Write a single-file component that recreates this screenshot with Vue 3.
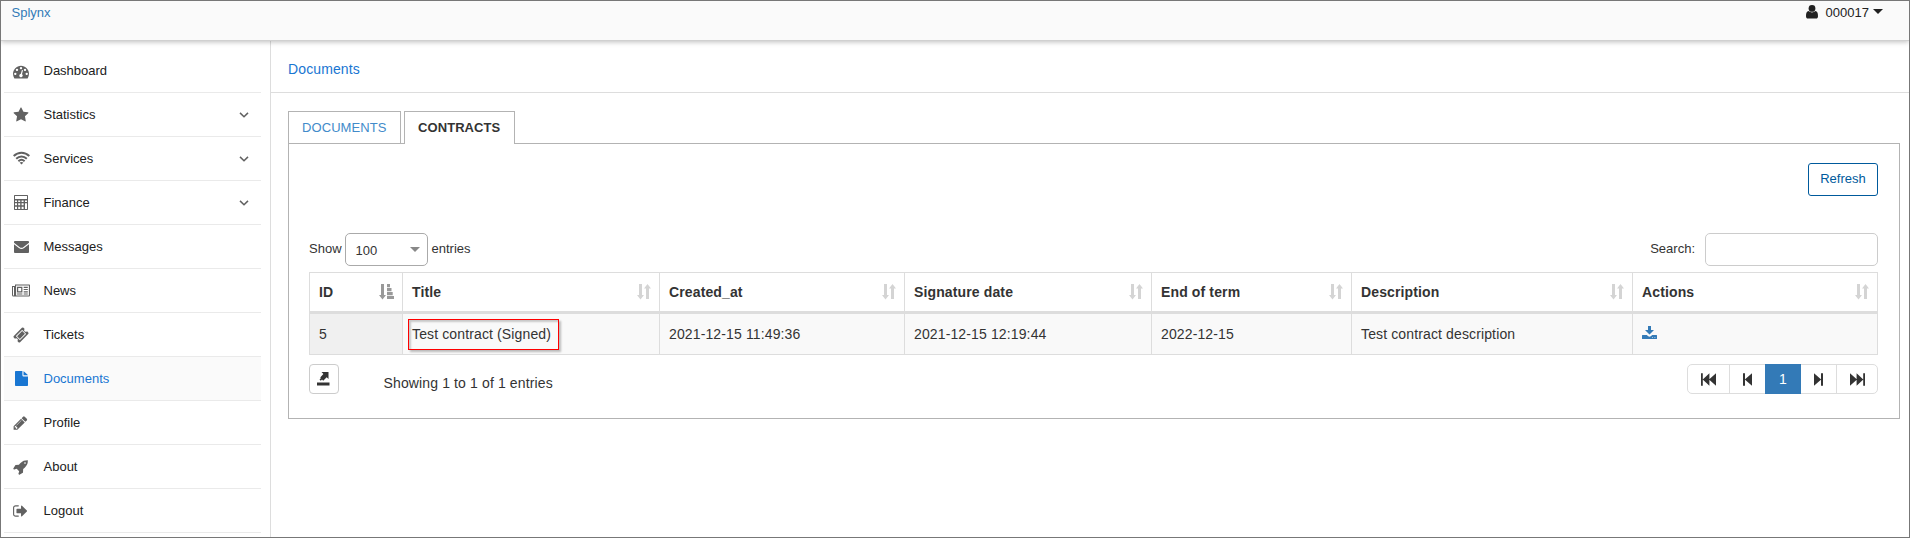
<script setup>
const menu = [
  { label: 'Dashboard', icon: 'dashboard' },
  { label: 'Statistics', icon: 'star', sub: true },
  { label: 'Services', icon: 'wifi', sub: true },
  { label: 'Finance', icon: 'calc', sub: true },
  { label: 'Messages', icon: 'mail' },
  { label: 'News', icon: 'news' },
  { label: 'Tickets', icon: 'ticket' },
  { label: 'Documents', icon: 'file', active: true },
  { label: 'Profile', icon: 'pencil' },
  { label: 'About', icon: 'rocket' },
  { label: 'Logout', icon: 'logout' },
]

const solid = {
  dashboard: { box: '0 -64 1792 1792', d: 'M384 1152q0-53-37.5-90.5t-90.5-37.5-90.5 37.5-37.5 90.5 37.5 90.5 90.5 37.5 90.5-37.5 37.5-90.5zm192-448q0-53-37.5-90.5t-90.5-37.5-90.5 37.5-37.5 90.5 37.5 90.5 90.5 37.5 90.5-37.5 37.5-90.5zm428 481l101-382q6-26-7.5-48.5t-38.5-29.5-48 6.5-30 39.5l-101 382q-60 5-107 43.5t-63 98.5q-20 77 20 146t117 89 146-20 89-117q16-60-6-117t-72-91zm660-33q0-53-37.5-90.5t-90.5-37.5-90.5 37.5-37.5 90.5 37.5 90.5 90.5 37.5 90.5-37.5 37.5-90.5zm-640-640q0-53-37.5-90.5t-90.5-37.5-90.5 37.5-37.5 90.5 37.5 90.5 90.5 37.5 90.5-37.5 37.5-90.5zm448 192q0-53-37.5-90.5t-90.5-37.5-90.5 37.5-37.5 90.5 37.5 90.5 90.5 37.5 90.5-37.5 37.5-90.5zm320 448q0 261-141 483-19 29-54 29h-1402q-35 0-54-29-141-221-141-483 0-182 71-348t191-286 286-191 348-71 348 71 286 191 191 286 71 348z' },
  star: { box: '0 0 1792 1792', d: 'M1728 647q0 22-26 48l-363 354 86 500q1 7 1 20 0 21-10.5 35.5t-30.5 14.5q-19 0-40-12l-449-236-449 236q-22 12-40 12-21 0-31.5-14.5t-10.5-35.5q0-6 2-20l86-500-364-354q-25-27-25-48 0-37 56-46l502-73 225-455q19-41 49-41t49 41l225 455 502 73q56 9 56 46z' },
  ticket: { box: '0 0 1792 1792', d: 'M1024 452l316 316-572 572-316-316zm-211 979l618-618q19-19 19-45t-19-45l-362-362q-18-18-45-18t-45 18l-618 618q-19 19-19 45t19 45l362 362q18 18 45 18t45-18zm889-637l-907 908q-37 37-90.5 37t-90.5-37l-126-126q56-56 56-136t-56-136-136-56-136 56l-125-126q-37-37-37-90.5t37-90.5l907-906q37-37 90.5-37t90.5 37l125 125q-56 56-56 136t56 136 136 56 136-56l126 125q37 37 37 90.5t-37 90.5z' },
  pencil: { box: '60 0 1792 1792', d: 'M491 1536l91-91-235-235-91 91v107h128v128h107zm523-928q0-22-22-22-10 0-17 7l-542 542q-7 7-7 17 0 22 22 22 10 0 17-7l542-542q7-7 7-17zm-54-192l416 416-832 832h-416v-416zm683 96q0 53-37 90l-166 166-416-416 166-165q36-38 90-38 53 0 91 38l235 234q37 39 37 91z' },
  rocket: { box: '0 0 1792 1792', d: 'M1440 448q0-40-28-68t-68-28-68 28-28 68 28 68 68 28 68-28 28-68zm224-288q0 249-75.5 430.5t-253.5 360.5q-81 80-195 176l-20 379q-2 16-16 26l-384 224q-7 4-16 4-12 0-23-9l-64-64q-13-14-8-32l85-276-281-281-276 85q-3 1-9 1-14 0-23-9l-64-64q-17-19-5-39l224-384q10-14 26-16l379-20q96-114 176-195 188-187 358-258t431-71q14 0 24 9.5t10 22.5z' },
  logout: { box: '60 0 1792 1792', d: 'M704 1440q0 4 1 20t.5 26.5-3 23.5-10 19.5-20.5 6.5h-320q-119 0-203.5-84.5t-84.5-203.5v-704q0-119 84.5-203.5t203.5-84.5h320q13 0 22.5 9.5t9.5 22.5q0 4 1 20t.5 26.5-3 23.5-10 19.5-20.5 6.5h-320q-66 0-113 47t-47 113v704q0 66 47 113t113 47h312l11.5 1 11.5 3 8 5.5 7 9 2 13.5zm928-544q0 26-19 45l-544 544q-19 19-45 19t-45-19-19-45v-288h-448q-26 0-45-19t-19-45v-384q0-26 19-45t45-19h448v-288q0-26 19-45t45-19 45 19l544 544q19 19 19 45z' },
}

const columns = [
  { name: 'ID', sorted: true },
  { name: 'Title' },
  { name: 'Created_at' },
  { name: 'Signature date' },
  { name: 'End of term' },
  { name: 'Description' },
  { name: 'Actions' },
]
</script>

<template>
  <div class="page">
    <header class="topbar">
      <a class="brand">Splynx</a>
      <div class="user">
        <svg width="12" height="14" viewBox="0 0 12 14"><circle cx="6" cy="3.4" r="3.4" /><path d="M2.6 6.1C4.4 8 7.600 8 9.400 6.100C11.300 6.400 12 8.200 12 11.200C12 12.600 11.200 13.500 10.100 13.500H1.900C.8 13.500 0 12.600 0 11.200C0 8.200.7 6.400 2.600 6.100Z" /></svg>
        <span>000017</span>
        <i class="caret"></i>
      </div>
    </header>

    <div class="body">
      <nav class="sidebar">
        <a v-for="m in menu" :key="m.label" class="item" :class="{ active: m.active }">
          <span class="slot">
            <svg v-if="solid[m.icon]" width="16" height="16" :viewBox="solid[m.icon].box"><path :d="solid[m.icon].d" /></svg>
            <svg v-else-if="m.icon === 'wifi'" width="17" height="17" viewBox="0 0 17 17" class="line">
              <path d="M.7 6C5.200 1.600 11.800 1.600 16.300 6" /><path d="M3.200 8.700C6.300 5.700 10.700 5.700 13.800 8.700" /><path d="M5.400 11.200C7.300 9.500 9.700 9.500 11.600 11.200" />
              <path class="fill" d="M6.600 12.600Q8.500 11.200 10.400 12.600L8.500 14.600Z" />
            </svg>
            <svg v-else-if="m.icon === 'calc'" width="17" height="17" viewBox="0 0 17 17">
              <path fill-rule="evenodd" d="M1.700 1H14.300Q15 1 15 1.700V15.300Q15 16 14.300 16H1.700Q1 16 1 15.300V1.700Q1 1 1.700 1ZM2 2V5H14V2ZM2 6.500V8H4V6.500ZM5.200 6.500V8H7.200V6.500ZM8.600 6.500V8H10.600V6.500ZM12 6.500V8H14V6.500ZM2 9.300V11.300H4V9.300ZM5.200 9.300V11.300H7.200V9.300ZM8.600 9.300V11.300H10.600V9.300ZM12 9.300V15H14V9.300ZM2 12.700V15H4V12.700ZM5.200 12.700V15H7.200V12.700ZM8.600 12.700V15H10.600V12.700Z" />
            </svg>
            <svg v-else-if="m.icon === 'mail'" width="17" height="17" viewBox="0 0 17 17">
              <path d="M1 3.900Q1 3 1.900 3H15.100Q16 3 16 3.900V4.800L10.600 9Q8.500 10.700 6.400 9L1 4.800Z" /><path d="M1 6.300L5.900 10Q8.500 12 11.100 10L16 6.300V14.100Q16 15 15.100 15H1.900Q1 15 1 14.100Z" />
            </svg>
            <svg v-else-if="m.icon === 'news'" width="18" height="17" viewBox="0 0 18 17" class="wide">
              <path fill-rule="evenodd" d="M3 2.500H17.300Q18 2.500 18 3.200V13.400Q18 14.500 16.900 14.500H1.600Q0 14.500 0 12.900V4H3ZM4.100 3.600V13.400H16.900V3.600ZM1 5V12.900Q1 13.400 1.500 13.400Q2 13.400 2 12.900V5Z" />
              <path fill-rule="evenodd" d="M5 4.700H10.400V10.400H5ZM6.200 5.900V9.200H9.200V5.900ZM11.700 4.700H15.800V5.900H11.700ZM11.700 7H15.800V8.100H11.700ZM11.700 9.300H15.800V10.400H11.700ZM5 11.500H10.400V12.600H5ZM11.700 11.500H15.800V12.600H11.700Z" />
            </svg>
            <svg v-else width="17" height="17" viewBox="0 0 17 17">
              <path d="M2.800 1H9.400V5.200Q9.400 6.400 10.600 6.400H15V15.300Q15 16 14.200 16H2.800Q2 16 2 15.200V1.800Q2 1 2.800 1ZM10.500 1.200Q10.900 1.300 11.300 1.700L14.400 4.500Q14.800 4.900 14.900 5.300H10.500Z" />
            </svg>
          </span>
          <span class="label">{{ m.label }}</span>
          <svg v-if="m.sub" class="chev" width="10" height="6" viewBox="0 0 10 6"><path d="M1 .9L5 4.700L9 .9" /></svg>
        </a>
      </nav>

      <main class="content">
        <h1 class="title">Documents</h1>
        <div class="tabs">
          <a class="tab">DOCUMENTS</a>
          <a class="tab current">CONTRACTS</a>
        </div>
        <section class="panel">
          <div class="actions"><button class="refresh">Refresh</button></div>

          <div class="filters">
            <span>Show</span>
            <div class="select"><span>100</span><i class="caret"></i></div>
            <span>entries</span>
            <label class="search">Search:</label>
            <input class="field" />
          </div>

          <table class="grid">
            <colgroup><col class="c1" /><col class="c2" /><col class="c3" /><col class="c4" /><col class="c5" /><col class="c6" /><col class="c7" /></colgroup>
            <thead>
              <tr>
                <th v-for="c in columns" :key="c.name">
                  <div class="head">
                    <span>{{ c.name }}</span>
                    <svg v-if="c.sorted" class="sorted" width="15" height="16" viewBox="0 0 15 16"><path d="M2 0H5V11H7L3.500 15.500L0 11H2ZM8 0H11V3.200H8ZM8 4H12.500V7.200H8ZM8 8H13.700V11.200H8ZM8 12H15V15H8Z" /></svg>
                    <svg v-else width="14" height="16" viewBox="0 0 14 16"><path d="M2 0H5V11H7L3.500 15.500L0 11H2ZM9 15V4.500H7L10.500 0L14 4.500H12V15Z" /></svg>
                  </div>
                </th>
              </tr>
            </thead>
            <tbody>
              <tr>
                <td class="key">5</td>
                <td><span class="marked">Test contract (Signed)</span></td>
                <td>2021-12-15 11:49:36</td>
                <td>2021-12-15 12:19:44</td>
                <td>2022-12-15</td>
                <td>Test contract description</td>
                <td>
                  <svg class="download" width="15" height="13" viewBox="0 0 15 13"><path fill-rule="evenodd" d="M6 0H9V4H12L7.500 8.500L3 4H6ZM0 9.500Q0 9 .5 9H4.800L6.200 10.300Q7.500 11.200 8.800 10.300L10.200 9H14.500Q15 9 15 9.500V12.500Q15 13 14.500 13H.5Q0 13 0 12.500ZM10.200 11.200V11.900H11V11.200ZM12.500 11.200V11.900H13.300V11.200Z" /></svg>
                </td>
              </tr>
            </tbody>
          </table>

          <div class="foot">
            <button class="export">
              <svg width="13" height="14" viewBox="0 0 13 14"><path d="M4.500 0H11.500V7L9.700 5.300L6.200 8.800L5 7.600L3.800 8.800L2.500 7.500L4 6L3.200 5.400L6.400 2ZM0 10.500H12.500V13.500H0Z" /></svg>
            </button>
            <span class="info">Showing 1 to 1 of 1 entries</span>
            <div class="pager">
              <a class="w1"><svg width="15" height="13" viewBox="0 0 15 13"><path d="M0 .3H1.800V12.700H0ZM8.400 .3V12.700L1.700 6.500ZM15 .3V12.700L8 6.500Z" /></svg></a>
              <a class="w2"><svg width="9" height="13" viewBox="0 0 9 13"><path d="M0 .3H2V12.700H0ZM9 .3V12.700L1.800 6.500Z" /></svg></a>
              <a class="on">1</a>
              <a class="w2"><svg width="9" height="13" viewBox="0 0 9 13"><path d="M7 .3H9V12.700H7ZM0 .3V12.700L7.200 6.500Z" /></svg></a>
              <a class="w3"><svg width="15" height="13" viewBox="0 0 15 13"><path d="M13.200 .3H15V12.700H13.200ZM6.600 .3V12.700L13.300 6.500ZM0 .3V12.700L7 6.500Z" /></svg></a>
            </div>
          </div>
        </section>
      </main>
    </div>
  </div>
</template>

<style>
body { margin: 0; background: #fff; }
</style>

<style scoped>
* { box-sizing: border-box; }
svg { display: block; fill: currentColor; flex: none; }
.page { width: 1910px; height: 538px; overflow: hidden; border: 1px solid #777; background: #fff; font: 13px/15px "Liberation Sans", Arial, sans-serif; color: #333; display: flex; flex-direction: column; }
.topbar { height: 40px; flex: none; background: #fafafa; border-bottom: 1px solid #d0d0d0; box-shadow: 0 1px 5px rgba(0, 0, 0, .26); position: relative; display: flex; justify-content: space-between; padding: 4px 26px 0 10.500px; }
.brand { color: #337ab7; }
.user { display: flex; color: #212121; height: 15px; }
.user svg { margin-right: 8px; }
.caret { width: 0; height: 0; border: 5px solid transparent; border-bottom: 0; border-top-color: currentColor; }
.user .caret { margin: 4px 0 0 4px; }
.body { flex: 1; display: flex; min-height: 0; }
.sidebar { width: 269px; flex: none; padding: 8px 9px 0 3px; }
.item { height: 44px; border-bottom: 1px solid #eaeaea; display: flex; align-items: center; padding-left: 8.500px; color: #212121; }
.slot { width: 17px; height: 17px; display: flex; align-items: center; justify-content: center; color: #616161; margin-right: 14px; }
.wide { margin-left: -1px; }
.line { fill: none; stroke: currentColor; stroke-width: 2; }
.line .fill { fill: currentColor; stroke: none; }
.label { flex: 1; }
.chev { fill: none; stroke: #616161; stroke-width: 1.500; margin-right: 12.500px; }
.item.active { background: #fafafa; color: #1976d2; }
.active .slot { color: #1976d2; }
.content { flex: 1; border-left: 1px solid #ddd; min-width: 0; }
.title { height: 52px; margin: 0; border-bottom: 1px solid #ddd; padding: 20px 17px 0; font-size: 14px; line-height: 16px; font-weight: 400; letter-spacing: .12px; color: #1976d2; }
.tabs { display: flex; gap: 3px; margin: 18px 0 0 17px; position: relative; }
.tab { height: 32px; border: 1px solid #b3b3b3; border-bottom: 0; padding: 8px 13px 0; width: 113px; color: #428bca; letter-spacing: .08px; }
.tab.current { width: 111px; height: 33px; margin-bottom: -1px; background: #fff; color: #333; font-weight: 700; }
.panel { height: 276px; margin: 0 9px 0 17px; border: 1px solid #b3b3b3; padding: 19px 21px 0 20px; }
.actions { display: flex; justify-content: flex-end; }
.refresh { width: 70px; height: 33px; border: 1px solid #005a9c; border-radius: 3px; background: #fff; color: #005a9c; font: inherit; padding: 0 0 2px; }
.filters { display: flex; align-items: center; height: 33px; margin-top: 37px; }
.filters > span, .search { margin-top: -2px; }
.select { width: 83px; height: 33px; margin: 0 4px 0 3px; border: 1px solid #aaa; border-radius: 5px; display: flex; justify-content: space-between; padding: 9px 7px 0 10px; }
.select .caret { border-top-color: #888; margin-top: 4px; }
.search { margin-left: auto; }
.field { width: 173px; height: 33px; border: 1px solid #ccc; border-radius: 5px; margin-left: 10px; padding: 0; background: #fff; outline: 0; }
.grid { border-collapse: separate; border-spacing: 0; table-layout: fixed; width: 1569px; margin-top: 6px; font-size: 14px; line-height: 16px; letter-spacing: .13px; border-left: 1px solid #ddd; border-top: 1px solid #ddd; }
.c1 { width: 93px; } .c2 { width: 257px; } .c3 { width: 245px; } .c4 { width: 247px; } .c5 { width: 200px; } .c6 { width: 281px; } .c7 { width: 245px; }
th, td { padding: 0 8px 0 9px; text-align: left; border-right: 1px solid #ddd; }
th { height: 41px; border-bottom: 3px solid #ddd; }
td { height: 41px; background: #f9f9f9; border-bottom: 1px solid #ddd; }
td.key { background: #f0f0f0; }
.head { display: flex; justify-content: space-between; align-items: center; }
.head svg { color: #d4d4d4; }
.head svg.sorted { color: #999; }
.marked { display: block; height: 31px; width: 151px; margin: 0 0 0 -4px; padding: 6px 0 0 3px; border: 1px solid #f00; box-shadow: 2px 2px 2px rgba(0, 0, 0, .25), inset 2px 2px 2px rgba(0, 0, 0, .2); white-space: nowrap; }
.download { color: #337ab7; margin-top: -3px; }
.foot { display: flex; margin-top: 9px; height: 30px; font-size: 14px; line-height: 16px; }
.export { width: 30px; height: 30px; border: 1px solid #ccc; border-radius: 4px; background: #fff; color: #333; padding: 0 1px 0 0; display: flex; align-items: center; justify-content: center; }
.info { margin: 11px auto 0 44.500px; letter-spacing: .13px; }
.pager { display: flex; width: 191px; border: 1px solid #ddd; border-radius: 5px; color: #333; }
.pager a { display: flex; align-items: center; justify-content: center; }
.w1 { width: 42px; border-right: 1px solid #ddd; }
.w2 { width: 35px; }
.w3 { flex: 1; border-left: 1px solid #ddd; }
.pager .on { width: 36px; margin: -1px 0; background: #337ab7; color: #fff; padding-bottom: 1px; }
</style>
